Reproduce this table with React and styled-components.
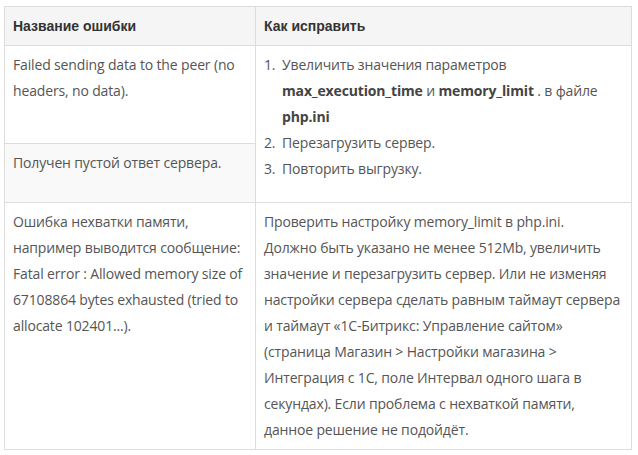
import React from "react"
import styled, { createGlobalStyle } from "styled-components"

const GlobalStyle = createGlobalStyle`
  html, body {
    margin: 0;
    background: #fff;
  }
  body {
    font-family: "Open Sans", "Liberation Sans", sans-serif;
    color: #555;
  }
`

const Page = styled.div`
  padding: 6px 4px;
`

const Table = styled.table`
  width: 628px;
  border-collapse: collapse;
  border: 1px solid #ddd;
  font-size: 14px;
  line-height: 26px;
`

const HeadCell = styled.th`
  text-align: left;
  vertical-align: top;
  padding: 6px 8px;
  border: 1px solid #ddd;
  background: #f5f5f5;
  color: #333;
  font-family: "Liberation Sans", Arial, sans-serif;
  font-weight: bold;
  width: ${(props) => (props.$width ? `${props.$width}px` : "auto")};
`

const Cell = styled.td`
  vertical-align: top;
  padding: 6px 8px;
  border: 1px solid #ddd;
  letter-spacing: -0.15px;
  background: ${(props) => (props.$striped ? "#f9f9f9" : "#fff")};
`

const Steps = styled.ol`
  list-style: none;
  counter-reset: step;
  margin: 0 0 14px;
  padding: 0;
`

const Step = styled.li`
  counter-increment: step;
  display: flex;
  &::before {
    content: counter(step) ".";
    flex: 0 0 18px;
  }
`

const Strong = styled.b`
  font-weight: 700;
  color: #444;
`

const errors = [
  {
    name: "Failed sending data to the peer (no headers, no data).",
  },
  {
    name: "Получен пустой ответ сервера.",
    striped: true,
  },
]

export default function App() {
  return (
    <>
      <GlobalStyle />
      <Page>
        <Table>
          <thead>
            <tr>
              <HeadCell $width={234}>Название ошибки</HeadCell>
              <HeadCell>Как исправить</HeadCell>
            </tr>
          </thead>
          <tbody>
            <tr>
              <Cell>{errors[0].name}</Cell>
              <Cell rowSpan={2}>
                <Steps>
                  <Step>
                    <span>
                      Увеличить значения параметров{" "}
                      <Strong>max_execution_time</Strong> и{" "}
                      <Strong>memory_limit</Strong> . в файле{" "}
                      <Strong>php.ini</Strong>
                    </span>
                  </Step>
                  <Step>Перезагрузить сервер.</Step>
                  <Step>Повторить выгрузку.</Step>
                </Steps>
              </Cell>
            </tr>
            <tr>
              <Cell $striped={errors[1].striped}>{errors[1].name}</Cell>
            </tr>
            <tr>
              <Cell>
                Ошибка нехватки памяти, например выводится сообщение: Fatal
                error : Allowed memory size of 67108864 bytes exhausted (tried
                to allocate 102401...).
              </Cell>
              <Cell>
                Проверить настройку memory_limit в php.ini.
                <br />
                Должно быть указано не менее 512Mb, увеличить значение и
                перезагрузить сервер. Или не изменяя настройки сервера сделать
                равным таймаут сервера и таймаут «1С-Битрикс: Управление
                сайтом» (страница Магазин &gt; Настройки магазина &gt;
                Интеграция с 1С, поле Интервал одного шага в секундах). Если
                проблема с нехваткой памяти, данное решение не подойдёт.
              </Cell>
            </tr>
          </tbody>
        </Table>
      </Page>
    </>
  )
}
